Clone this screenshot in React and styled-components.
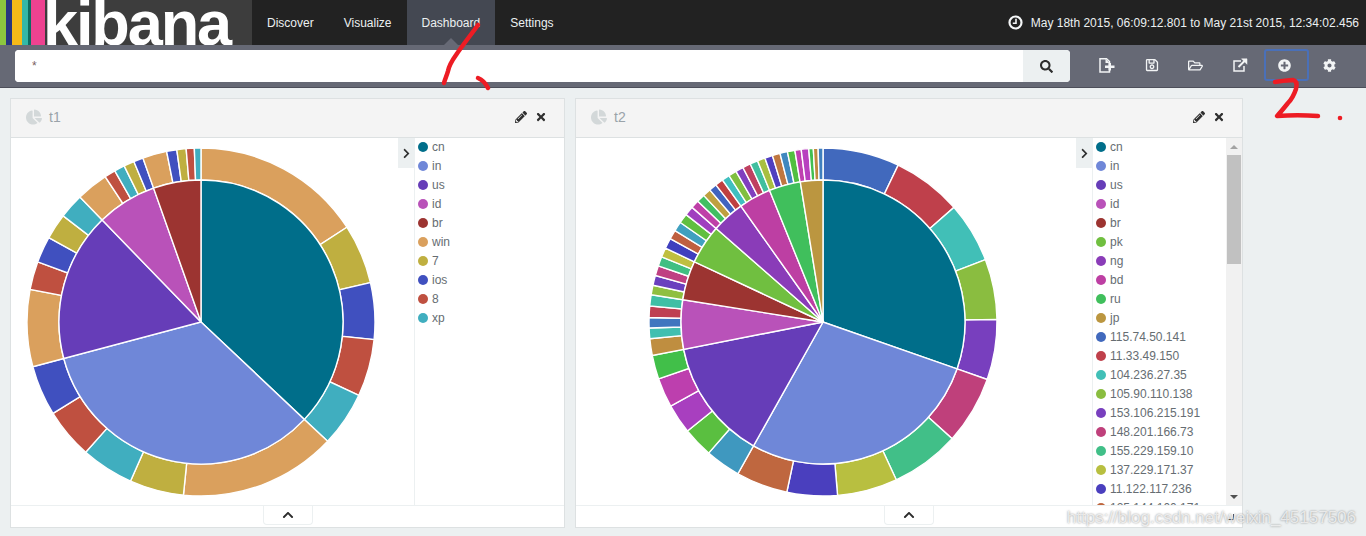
import React from "react";
import styled, { createGlobalStyle } from "styled-components";
import {
  FaChartPie,
  FaChevronRight,
  FaChevronUp,
  FaCog,
  FaPencilAlt,
  FaPlusCircle,
  FaRegFolderOpen,
  FaRegSave,
  FaSearch,
  FaTimes,
} from "react-icons/fa";

const GlobalStyle = createGlobalStyle`
  html, body {
    margin: 0;
    height: 536px;
    overflow: hidden;
    background: #ecf0f1;
    font-family: "Liberation Sans", Arial, sans-serif;
  }
`;

/* 상단 메뉴 */
const Page = styled.div`
  position: relative;
  width: 1366px;
  height: 536px;
  overflow: hidden;
`;

const Nav = styled.header`
  display: flex;
  height: 45px;
  background: #222222;
  color: #ecf0f1;
  font-size: 12px;
`;

const Stripe = styled.div`
  width: ${(p) => p.$w}px;
  background: ${(p) => p.$c};
`;

const Brand = styled.div`
  display: flex;
  width: 252px;
  flex: none;
  background: #3d3d3d;
  overflow: hidden;
`;

const LogoText = styled.span`
  margin-left: -2px;
  color: #ffffff;
  font-size: 63px;
  font-weight: 700;
  letter-spacing: -2.1px;
  line-height: 45px;
  height: 45px;
  transform: translateY(1px);
`;

const NavItem = styled.a`
  position: relative;
  display: flex;
  align-items: center;
  padding: 0 15px;
  background: ${(p) => (p.$active ? "#444852" : "transparent")};
  &::after {
    content: "";
    display: ${(p) => (p.$active ? "block" : "none")};
    position: absolute;
    left: 50%;
    bottom: 0;
    margin-left: -7px;
    border: 7px solid transparent;
    border-top-width: 0;
    border-bottom-color: #666975;
  }
`;

const TimeRange = styled.div`
  display: flex;
  align-items: center;
  gap: 8px;
  margin-left: auto;
  padding-right: 7px;
`;

const SubNav = styled.div`
  display: flex;
  height: 43px;
  padding: 5px 0 0 15px;
  box-sizing: border-box;
  background: #666975;
  border-bottom: 1px solid #4d4f5a;
`;

const SearchForm = styled.form`
  display: flex;
  width: 1055px;
  height: 32px;
  margin: 0;
  border-radius: 4px;
  overflow: hidden;
  background: #ffffff;
`;

const SearchInput = styled.input`
  flex: 1;
  min-width: 0;
  border: 0;
  outline: 0;
  padding: 0 17px;
  font: 12px "Liberation Sans", Arial, sans-serif;
  color: #7b5f5f;
`;

const SearchButton = styled.div`
  display: flex;
  align-items: center;
  justify-content: center;
  width: 47px;
  background: #ecf0f1;
  color: #2d2d2d;
  font-size: 13px;
`;

const Toolbar = styled.div`
  display: flex;
  height: 30px;
  margin-left: 15px;
`;

const ToolButton = styled.div`
  display: flex;
  align-items: center;
  justify-content: center;
  width: 44.4px;
  color: #f2f4f5;
  font-size: 13px;
`;

/* 대시보드 패널 */
const Board = styled.main`
  display: flex;
  gap: 10px;
  padding: 10px 0 0 10px;
`;

const Panel = styled.section`
  display: flex;
  flex-direction: column;
  width: ${(p) => p.$w}px;
  height: 430px;
  box-sizing: border-box;
  border: 1px solid #dde1e2;
  background: #ffffff;
`;

const PanelHead = styled.div`
  display: flex;
  align-items: center;
  height: 36px;
  flex: none;
  padding: 0 17px 2px 15px;
  background: #f4f4f4;
  border-bottom: 1px solid #dde1e2;
  color: #9aa3a9;
  font-size: 14px;
`;

const PanelTitle = styled.span`
  margin-left: 7px;
`;

const PanelActions = styled.div`
  display: flex;
  align-items: center;
  gap: 8px;
  margin-left: auto;
  color: #2f2f2f;
  font-size: 12px;
`;

const PanelBody = styled.div`
  position: relative;
  display: flex;
  flex: 1;
  min-height: 0;
`;

const ChartArea = styled.div`
  flex: 1;
  padding: 8px 0 0 ${(p) => p.$left}px;
`;

const LegendBox = styled.div`
  display: flex;
  width: 150px;
  flex: none;
  box-sizing: border-box;
  border-left: 1px solid #ecf0f1;
`;

const Legend = styled.ul`
  flex: 1;
  min-width: 0;
  margin: 0;
  padding: 0 0 0 3px;
  list-style: none;
  color: #666d72;
  font-size: 12px;
  overflow: hidden;
`;

const LegendRow = styled.li`
  display: flex;
  align-items: center;
  gap: 4px;
  height: 19px;
  white-space: nowrap;
  &:first-child {
    margin-top: -1px;
  }
`;

const Dot = styled.i`
  width: 10px;
  height: 10px;
  flex: none;
  border-radius: 50%;
  background: ${(p) => p.$c};
`;

const ScrollRail = styled.div`
  display: flex;
  flex-direction: column;
  align-items: center;
  width: 16px;
  flex: none;
  background: #f1f1f1;
`;

const ScrollArrow = styled.div`
  display: flex;
  align-items: center;
  justify-content: center;
  height: 17px;
  flex: none;
  margin-top: ${(p) => (p.$down ? "auto" : "0")};
  &::before {
    content: "";
    border: 4px solid transparent;
    ${(p) =>
      p.$down
        ? "border-bottom-width: 0; border-top-color: #505050;"
        : "border-top-width: 0; border-bottom-color: #a3a3a3;"}
  }
`;

const ScrollThumb = styled.div`
  width: 14px;
  height: 109px;
  background: #c1c1c1;
`;

const LegendToggle = styled.div`
  position: absolute;
  top: 0;
  right: 150px;
  display: flex;
  align-items: center;
  justify-content: center;
  width: 16px;
  height: 30px;
  background: #ecf0f1;
  color: #2f2f2f;
  font-size: 11px;
`;

const SpyBar = styled.div`
  position: relative;
  display: flex;
  justify-content: center;
  height: 21px;
  flex: none;
  border-top: 1px solid #ecf0f1;
`;

const SpyTab = styled.div`
  display: flex;
  align-items: center;
  justify-content: center;
  width: 48px;
  height: 18px;
  border: 1px solid #ecf0f1;
  border-top: 0;
  border-radius: 0 0 4px 4px;
  color: #2c2c2c;
  font-size: 12px;
`;

const ResizeMark = styled.span`
  position: absolute;
  right: 8px;
  top: 8px;
  width: 5px;
  height: 5px;
  border-right: 1px solid #555;
  border-bottom: 1px solid #555;
`;

/* 위에 덧그린 표시 */
const Markup = styled.svg`
  position: absolute;
  left: 0;
  top: 0;
  pointer-events: none;
`;

const Watermark = styled.div`
  position: absolute;
  right: 10px;
  top: 508px;
  color: rgba(255, 255, 255, 0.72);
  font-size: 17px;
  white-space: nowrap;
  text-shadow: 0 0 2px rgba(60, 60, 60, 0.6);
`;

const ClockIcon = () => (
  <svg width="15" height="15" viewBox="0 0 15 15" fill="none" stroke="#f4f6f7">
    <circle cx="7.5" cy="7.5" r="6" strokeWidth="2.2" />
    <path d="M8 3.8V8.2H4.8" strokeWidth="1.6" />
  </svg>
);

const NewFileIcon = () => (
  <svg width="16" height="15" viewBox="0 0 16 15">
    <path d="M1 .8H7.5L10.5 3.5V14H1Z" fill="none" stroke="#f2f4f5" strokeWidth="1.5" />
    <path d="M6.5 .8V5H10.5Z" fill="#f2f4f5" />
    <path d="M9.5 5H12V7.5H15.5V10H12V12.5H9.5V10H6V7.5H9.5Z" fill="#f2f4f5" />
  </svg>
);

const ShareIcon = () => (
  <svg width="15" height="14" viewBox="0 0 15 14" fill="none" stroke="#f2f4f5">
    <path d="M8 3H1V13H11V8" strokeWidth="1.5" />
    <path d="M5.5 9L12 2.5" strokeWidth="2" />
    <path d="M8.5 .8H14V6.3Z" fill="#f2f4f5" strokeWidth=".5" />
  </svg>
);

const point = (r, deg) => {
  const a = (deg * Math.PI) / 180;
  return `${(176 + r * Math.sin(a)).toFixed(2)} ${(176 - r * Math.cos(a)).toFixed(2)}`;
};

const wedge = (inner, outer, from, to) => {
  const big = to - from > 180 ? 1 : 0;
  const head = `M${point(outer, from)}A${outer} ${outer} 0 ${big} 1 ${point(outer, to)}`;
  if (!inner) return `${head}L176 176Z`;
  return `${head}L${point(inner, to)}A${inner} ${inner} 0 ${big} 0 ${point(inner, from)}Z`;
};

const Ring = ({ inner, outer, items }) => {
  let from = 0;
  return items.map(([color, to]) => {
    const d = wedge(inner, outer, from, to);
    from = to;
    return <path key={`${color}${to}`} d={d} fill={color} stroke="#fff" strokeWidth="1.4" />;
  });
};

const Pie = ({ inner, outer }) => (
  <svg width="352" height="352" viewBox="0 0 352 352">
    <Ring inner={142} outer={174} items={outer} />
    <Ring inner={0} outer={142} items={inner} />
  </svg>
);

const C = {
  cn: "#006e8a",
  in: "#6f87d8",
  us: "#663db8",
  id: "#b952b9",
  br: "#9c3431",
  win: "#daa05d",
  seven: "#bfaf40",
  ios: "#4050bf",
  eight: "#bf5040",
  xp: "#40aebf",
};

const leftInner = [[C.cn, 133.3], [C.in, 255.1], [C.us, 315.9], [C.id, 340.5], [C.br, 360]];
const leftOuter = [
  [C.win, 57], [C.seven, 76.9], [C.ios, 95.8], [C.eight, 114.9], [C.xp, 133.3],
  [C.win, 185.8], [C.seven, 203.9], [C.xp, 221.5], [C.eight, 238.3], [C.ios, 255.1],
  [C.win, 280.8], [C.eight, 290.2], [C.ios, 299], [C.seven, 307.6], [C.xp, 315.9],
  [C.win, 326.6], [C.eight, 330.3], [C.xp, 333.8], [C.seven, 337.3], [C.ios, 340.5],
  [C.win, 348.6], [C.ios, 352], [C.seven, 355.1], [C.eight, 357.8], [C.xp, 360],
];
const leftLegend = [
  ["cn", C.cn], ["in", C.in], ["us", C.us], ["id", C.id], ["br", C.br],
  ["win", C.win], ["7", C.seven], ["ios", C.ios], ["8", C.eight], ["xp", C.xp],
];

const rightInner = [
  [C.cn, 109.3], [C.in, 209.3], [C.us, 258.9], [C.id, 279], [C.br, 295.1],
  ["#70bf40", 311.2], ["#8a3cb8", 324.7], ["#bd3fa3", 337.9], ["#40bf5c", 350.8], ["#bb9640", 360],
];
const rightOuter = [
  ["#4169bd", 25.6], ["#bf404b", 48.8], ["#41bfb7", 69], ["#8abd40", 89.2], ["#783fbe", 109.3],
  ["#bf407b", 132.1], ["#41bf88", 155.1], ["#b8bf40", 175.2], ["#4a3fbe", 192], ["#bf673f", 209.3],
  ["#3f98bf", 221.1], ["#5abf40", 231.2], ["#a83fbf", 241.1], ["#bd3fae", 250.9], ["#41bf49", 258.9],
  ["#bf8e40", 264.5], ["#41bfb0", 268], ["#4076bf", 271.5], ["#bf4052", 275.3], ["#3fbfa5", 279],
  ["#8fbf40", 282.2], ["#6a3fbe", 285.5], ["#bf4082", 288.8], ["#41bf82", 292], ["#bfbf40", 295.1],
  ["#3f3fbe", 298.6], ["#bf6040", 301.7], ["#40a0bf", 304.9], ["#61bf40", 308.1], ["#a03fbf", 311.2],
  ["#bf40a8", 314], ["#41bf62", 316.7], ["#bfa040", 319.4], ["#4063bf", 322], ["#bf4040", 324.7],
  ["#40bfbf", 327.3], ["#80bf40", 330], ["#803fbf", 332.6], ["#bf4060", 335.3], ["#41bf9e", 337.9],
  ["#a8bf40", 340.5], ["#503fbf", 343.1], ["#bf7740", 345.7], ["#4088bf", 348.2], ["#51bf40", 350.7],
  ["#bf40b0", 352.8], ["#b83fbf", 355.3], ["#41bf50", 356.8], ["#bf8a40", 358.4], ["#4080bf", 360],
];
const rightLegend = [
  ["cn", C.cn], ["in", C.in], ["us", C.us], ["id", C.id], ["br", C.br],
  ["pk", "#70bf40"], ["ng", "#8a3cb8"], ["bd", "#bd3fa3"], ["ru", "#40bf5c"], ["jp", "#bb9640"],
  ["115.74.50.141", "#4169bd"], ["11.33.49.150", "#bf404b"], ["104.236.27.35", "#41bfb7"],
  ["105.90.110.138", "#8abd40"], ["153.106.215.191", "#783fbe"], ["148.201.166.73", "#bf407b"],
  ["155.229.159.10", "#41bf88"], ["137.229.171.37", "#b8bf40"], ["11.122.117.236", "#4a3fbe"],
  ["125.144.100.171", "#bf673f"],
];

const VisPanel = ({ title, width, left, scroll, inner, outer, legend }) => (
  <Panel $w={width}>
    <PanelHead>
      <FaChartPie size={16} color="#d3d8d9" />
      <PanelTitle>{title}</PanelTitle>
      <PanelActions>
        <FaPencilAlt />
        <FaTimes />
      </PanelActions>
    </PanelHead>
    <PanelBody>
      <ChartArea $left={left}>
        <Pie inner={inner} outer={outer} />
      </ChartArea>
      <LegendToggle>
        <FaChevronRight />
      </LegendToggle>
      <LegendBox>
        <Legend>
          {legend.map(([label, color]) => (
            <LegendRow key={label}>
              <Dot $c={color} />
              {label}
            </LegendRow>
          ))}
        </Legend>
        {scroll && (
          <ScrollRail>
            <ScrollArrow />
            <ScrollThumb />
            <ScrollArrow $down />
          </ScrollRail>
        )}
      </LegendBox>
    </PanelBody>
    <SpyBar>
      <SpyTab>
        <FaChevronUp />
      </SpyTab>
      {scroll && <ResizeMark />}
    </SpyBar>
  </Panel>
);

const App = () => (
  <Page>
    <GlobalStyle />
    <Nav>
      <Brand>
        <Stripe $w={6} $c="#8cc63f" />
        <Stripe $w={6} $c="#27367f" />
        <Stripe $w={10} $c="#f5ba18" />
        <Stripe $w={6} $c="#33b8a8" />
        <Stripe $w={3} $c="#0d6d62" />
        <Stripe $w={14} $c="#ee4290" />
        <LogoText>kibana</LogoText>
      </Brand>
      <NavItem>Discover</NavItem>
      <NavItem>Visualize</NavItem>
      <NavItem $active>Dashboard</NavItem>
      <NavItem>Settings</NavItem>
      <TimeRange>
        <ClockIcon />
        May 18th 2015, 06:09:12.801 to May 21st 2015, 12:34:02.456
      </TimeRange>
    </Nav>
    <SubNav>
      <SearchForm>
        <SearchInput defaultValue="*" />
        <SearchButton>
          <FaSearch />
        </SearchButton>
      </SearchForm>
      <Toolbar>
        <ToolButton><NewFileIcon /></ToolButton>
        <ToolButton><FaRegSave size={14} /></ToolButton>
        <ToolButton><FaRegFolderOpen size={15} /></ToolButton>
        <ToolButton><ShareIcon /></ToolButton>
        <ToolButton><FaPlusCircle /></ToolButton>
        <ToolButton><FaCog /></ToolButton>
      </Toolbar>
    </SubNav>
    <Board>
      <VisPanel title="t1" width={555} left={14} inner={leftInner} outer={leftOuter} legend={leftLegend} />
      <VisPanel title="t2" width={668} left={71} scroll inner={rightInner} outer={rightOuter} legend={rightLegend} />
    </Board>
    <Markup width="1366" height="536" fill="none" strokeLinecap="round" strokeLinejoin="round">
      <rect x="1265" y="50" width="43" height="30" rx="2" stroke="#4a70b8" strokeWidth="2" />
      <g stroke="#ed1c24" strokeWidth="4.5">
        <path d="M478 25C470 36 462 46 456 55C451 62 449 66 448 71C447 75 445 79 444 83" />
        <path d="M478 78C483 80 486 84 488 88" />
        <path d="M1275 82C1282 81 1288 80 1293 80C1297 81 1297 85 1296 89C1294 95 1291 100 1288 103C1284 108 1280 113 1277 116C1290 115 1305 115 1318 116" />
      </g>
      <circle cx="1340" cy="118" r="2.3" fill="#ed1c24" />
    </Markup>
    <Watermark>https://blog.csdn.net/weixin_45157506</Watermark>
  </Page>
);

export default App;
